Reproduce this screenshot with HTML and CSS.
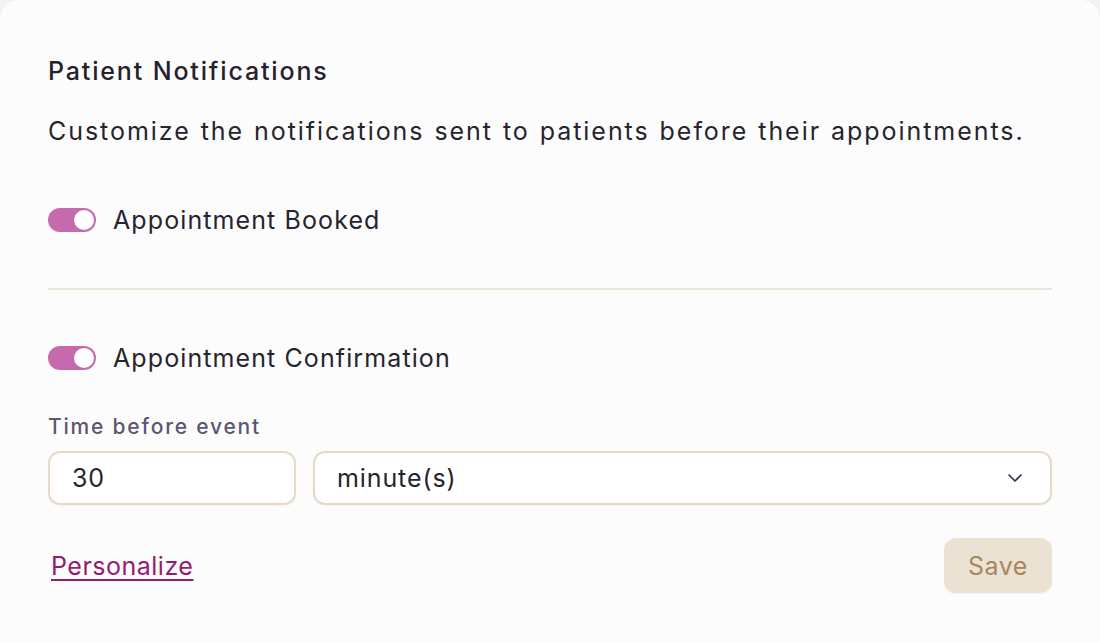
FILE: index.html
```html
<!DOCTYPE html>
<html lang="en">
<head>
<meta charset="utf-8">
<title>Patient Notifications</title>
<link rel="stylesheet" href="styles.css">
</head>
<body>
<section class="card">
  <h2 class="title">Patient Notifications</h2>
  <p class="desc">Customize the notifications sent to patients before their appointments.</p>

  <div class="toggle-row first">
    <span class="switch on"><span class="knob"></span></span>
    <span class="toggle-label">Appointment Booked</span>
  </div>

  <hr class="divider">

  <div class="toggle-row second">
    <span class="switch on"><span class="knob"></span></span>
    <span class="toggle-label">Appointment Confirmation</span>
  </div>

  <div class="field-label">Time before event</div>
  <div class="fields">
    <div class="input num">30</div>
    <div class="input select">
      <span>minute(s)</span>
      <svg class="chev" width="14" height="8" viewBox="0 0 14 8"><path d="M1 1 L7 7 L13 1" fill="none" stroke="#2d2a45" stroke-width="1.6" stroke-linecap="round" stroke-linejoin="round"/></svg>
    </div>
  </div>

  <div class="actions">
    <a class="link" href="#">Personalize</a>
    <button class="save">Save</button>
  </div>
</section>
</body>
</html>
```

FILE: styles.css
```css
* { box-sizing: border-box; }
html, body {
  margin: 0;
  padding: 0;
  background: #f3f3f3;
}
body {
  font-family: "Inter", "Open Sans", sans-serif;
  color: #26242e;
}
.card {
  background: #fdfcfc;
  border-radius: 18px 18px 0 0;
  box-shadow: 0 0 2px rgba(0,0,0,0.08);
  padding: 53px 48px 0 48px;
  height: 660px;
  display: flex;
  flex-direction: column;
}
.title {
  margin: 0;
  font-size: 25px;
  line-height: 36px;
  font-weight: 500;
  letter-spacing: 1.85px;
  color: #24222c;
}
.desc {
  margin: 24px 0 0 0;
  font-size: 25px;
  line-height: 36px;
  font-weight: 400;
  letter-spacing: 1.95px;
  word-spacing: 1px;
}
.toggle-row {
  display: flex;
  align-items: center;
  gap: 17px;
  height: 36px;
}
.toggle-row.first { margin-top: 53px; }
.toggle-row.second { margin-top: 50px; }
.switch {
  width: 48px;
  height: 24px;
  border-radius: 12px;
  background: #c66aae;
  position: relative;
  flex: none;
}
.knob {
  position: absolute;
  top: 2px;
  right: 2px;
  width: 20px;
  height: 20px;
  border-radius: 50%;
  background: #ffffff;
}
.toggle-label {
  font-size: 25px;
  line-height: 36px;
  letter-spacing: 1.1px;
}
.divider {
  border: 0;
  height: 2px;
  background: #eee4d8;
  margin: 50px 0 0 0;
}
.field-label {
  margin-top: 37px;
  font-size: 21px;
  line-height: 28px;
  font-weight: 500;
  letter-spacing: 1.8px;
  color: #5c5670;
}
.fields {
  margin-top: 10px;
  display: flex;
  gap: 17px;
}
.input {
  height: 54px;
  border: 2px solid #e6dac6;
  border-radius: 12px;
  background: #ffffff;
  padding: 0 22px;
  display: flex;
  align-items: center;
  font-size: 25px;
  letter-spacing: 0.9px;
  box-shadow: 0 1px 2px rgba(0,0,0,0.04);
}
.num { width: 248px; flex: none; }
.select {
  flex: 1;
  justify-content: space-between;
  padding-right: 28px;
}
.chev { display: block; }
.actions {
  margin-top: 33px;
  display: flex;
  align-items: center;
  justify-content: space-between;
}
.link {
  margin-left: 3px;
  font-size: 25px;
  letter-spacing: 0.5px;
  color: #931b73;
  text-decoration: underline;
  text-decoration-thickness: 2px;
  text-underline-offset: 4px;
}
.save {
  width: 108px;
  height: 55px;
  border: 0;
  border-radius: 12px;
  background: #ece2d4;
  color: #a8875f;
  font-family: inherit;
  font-size: 25px;
  letter-spacing: 0.5px;
  box-shadow: 0 1px 2px rgba(0,0,0,0.05);
}
```
